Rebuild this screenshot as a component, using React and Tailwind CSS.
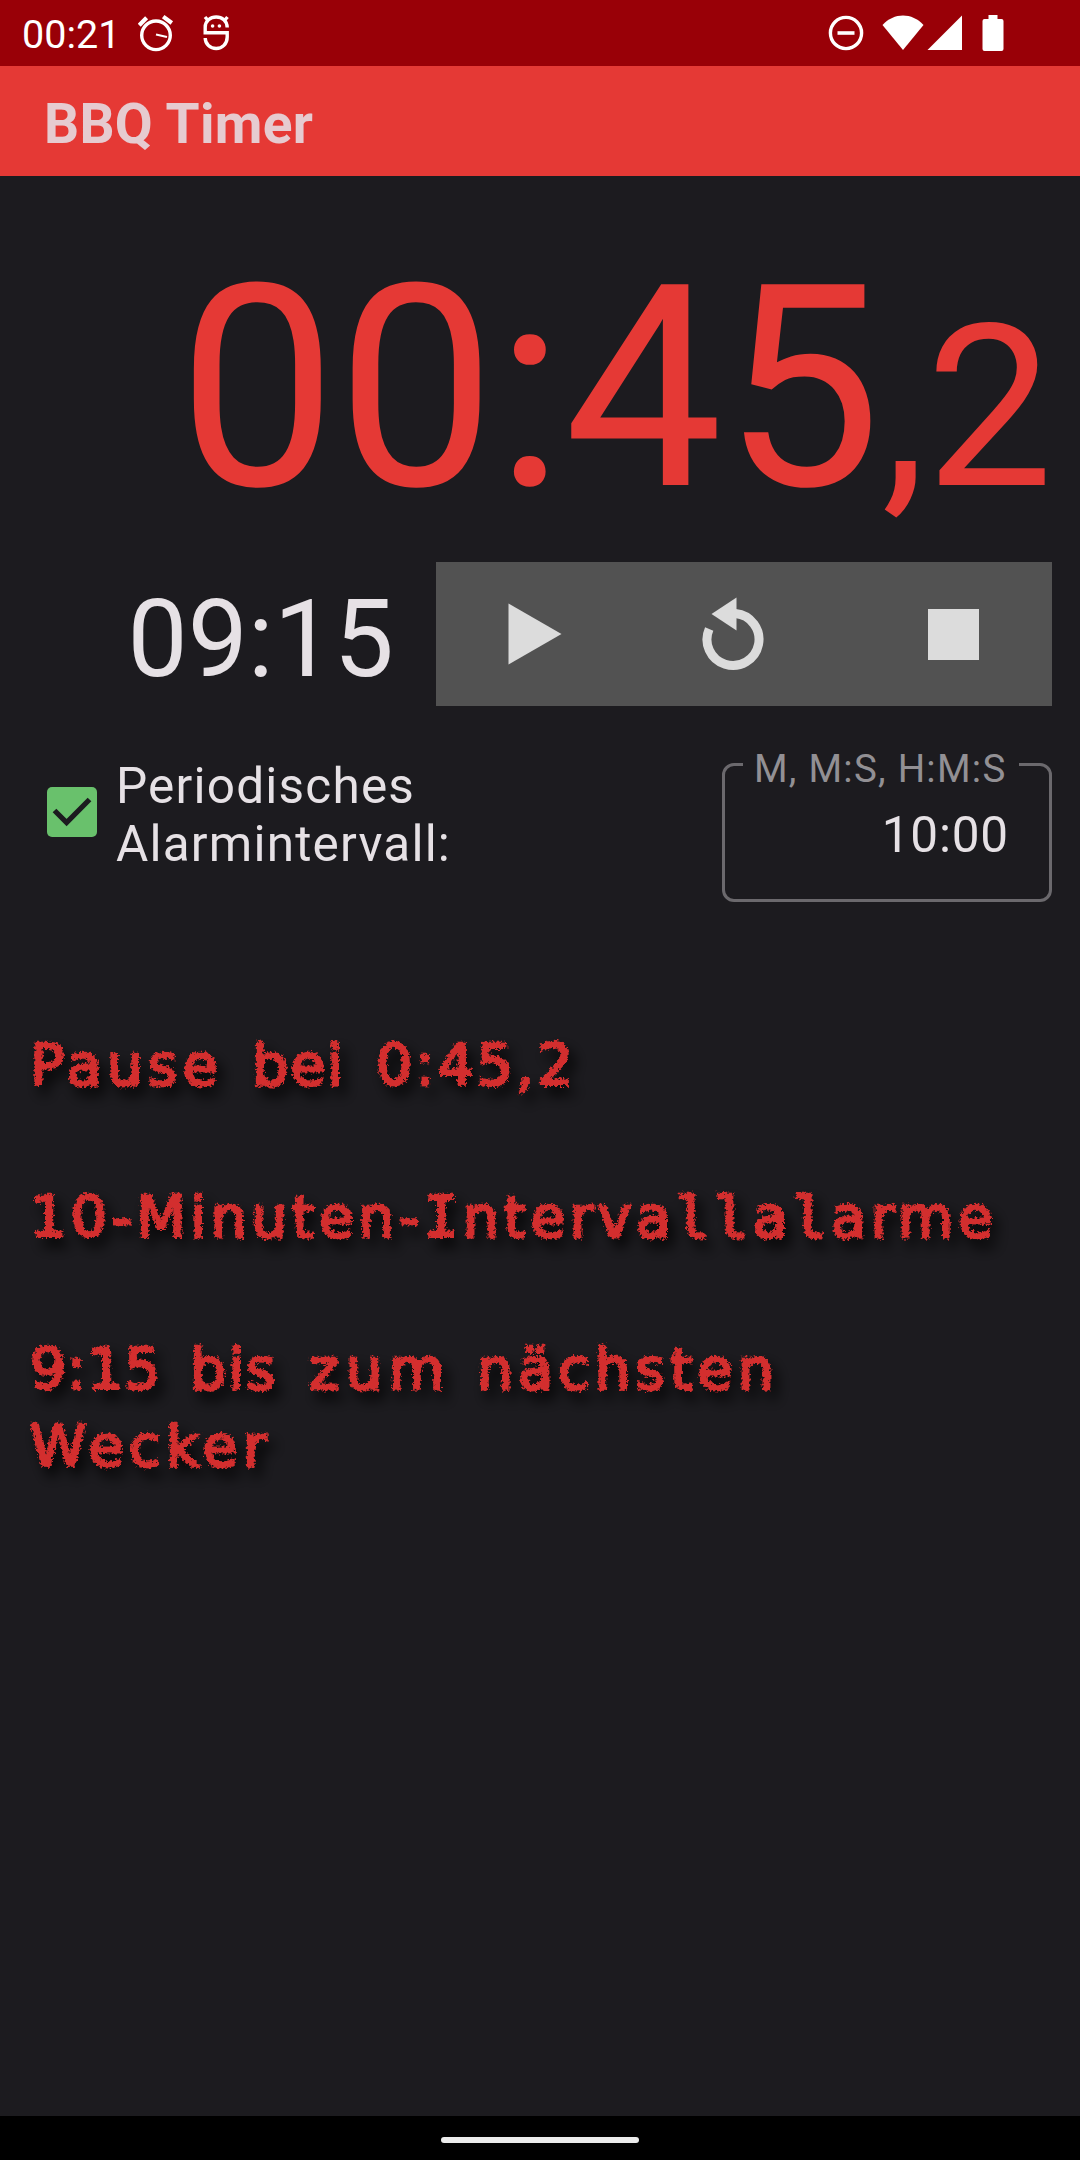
import React from "react";

function AlarmIcon() {
  return (
    <svg width="36" height="38" viewBox="0 0 36 38" fill="none" stroke="#fff">
      <circle cx="18" cy="21.3" r="14.3" strokeWidth="3.4" />
      <path d="M1.2 11.2 8.6 3.8M25.2 2.6 33.8 9" strokeWidth="4.2" />
      <path d="M18 20.5 29 23" strokeWidth="2" />
    </svg>
  );
}

function MascotIcon() {
  return (
    <svg width="28" height="38" viewBox="0 0 28 38" fill="none" stroke="#fff">
      <path d="M25.2 13.5C25.2 7 20 3 14.2 3S3.2 7 3.2 13V18.8H25.2V23C25.2 30 20.2 34.5 14.2 34.5S3.2 30 3.2 24" strokeWidth="3.4" />
      <path d="M3 3 6.500 7M25.500 3 22 7" strokeWidth="3.4" />
      <circle cx="10.6" cy="12" r="1.8" fill="#fff" stroke="none" />
      <circle cx="17.4" cy="12" r="1.8" fill="#fff" stroke="none" />
    </svg>
  );
}

function StatusBar() {
  return (
    <header className="flex h-[66px] items-center bg-[#990007] pl-[22px] text-white">
      <span className="mt-[4px] w-[116px] text-[39.5px] leading-none">00:21</span>
      <AlarmIcon />
      <span className="ml-[28px] flex"><MascotIcon /></span>
      <span className="ml-auto flex">
        <svg width="36" height="36" viewBox="0 0 36 36" fill="none" stroke="#fff">
          <circle cx="18" cy="18" r="15.6" strokeWidth="3.4" />
          <path d="M9.5 18H26.5" strokeWidth="3.6" />
        </svg>
      </span>
      <svg className="ml-[18px]" width="42" height="36" viewBox="0 0 42 36" fill="#fff">
        <path d="M0.5 10C12-2.7 30-2.7 41.5 10L21 35Z" />
      </svg>
      <svg className="ml-[3px]" width="36" height="36" viewBox="0 0 36 36" fill="#fff">
        <path d="M35 0.5V35H0.5Z" />
      </svg>
      <svg className="mr-[76px] ml-[19px]" width="22" height="36" viewBox="0 0 22 36" fill="#fff">
        <path d="M6.5 0H15.5V4H19.5Q21.5 4 21.5 6V34Q21.5 36 19.5 36H2.5Q0.5 36 0.5 34V6Q0.5 4 2.5 4H6.5Z" />
      </svg>
    </header>
  );
}

function Controls() {
  return (
    <div className="flex h-[144px] w-[616px] items-center bg-[#525252] text-[#dcdcdc]">
      <button className="ml-[72px]" aria-label="Start">
        <svg width="54" height="62" viewBox="0 0 54 62" fill="currentColor">
          <path d="M0.5 0.5 53.5 31 0.5 61.5Z" />
        </svg>
      </button>
      <button className="ml-[140px]" aria-label="Reset">
        <svg width="62" height="74" viewBox="0 0 62 74" fill="none">
          <path d="M33.5 16.6A26 26 0 1 1 7.2 32" stroke="currentColor" strokeWidth="9" />
          <path d="M9.5 17 34.5 0.5V33.5Z" fill="currentColor" />
        </svg>
      </button>
      <button className="ml-[164px]" aria-label="Stop">
        <span className="block size-[51px] bg-[#dcdcdc]" />
      </button>
    </div>
  );
}

// Letters with a foot or serif use the monospaced cut of the face.
function Chalk({ children }) {
  return children.split(/([Il]+)/).map((part, i) =>
    /^[Il]/.test(part) ? (
      <span key={i} className="font-['DejaVu_Sans_Mono',monospace]">{part}</span>
    ) : (
      part
    )
  );
}

function Notes() {
  return (
    <section className="mt-[125px] pl-[30px] font-['DejaVu_Sans',sans-serif] text-[57px] leading-[76.2px] whitespace-nowrap text-[#d32f2f] [-webkit-text-stroke:2.5px_#d32f2f] [filter:url(#chalk)_drop-shadow(6px_9px_7px_rgba(0,0,0,0.9))]">
      <p className="mb-[76px] flex">
        <span className="w-[222px] tracking-[5px]"><Chalk>Pause</Chalk></span>{" "}
        <span className="w-[124px] tracking-[2px]"><Chalk>bei</Chalk></span>{" "}
        <span className="tracking-[3px]"><Chalk>0:45,2</Chalk></span>
      </p>
      <p className="mb-[76px] tracking-[4.5px]"><Chalk>10-Minuten-Intervallalarme</Chalk></p>
      <p className="flex">
        <span className="w-[160px] tracking-[0.8px]"><Chalk>9:15</Chalk></span>{" "}
        <span className="w-[119px] tracking-[2px]"><Chalk>bis</Chalk></span>{" "}
        <span className="w-[168px] tracking-[7px]"><Chalk>zum</Chalk></span>{" "}
        <span className="tracking-[5px]"><Chalk>nächsten</Chalk></span>
      </p>
      <p className="tracking-[5.5px]"><Chalk>Wecker</Chalk></p>
    </section>
  );
}

export default function App() {
  return (
    <div className="flex h-[2160px] w-[1080px] flex-col overflow-hidden bg-[#1c1b1f] font-[Roboto,sans-serif]">
      <svg width="0" height="0" className="absolute" aria-hidden="true">
        <filter id="chalk" x="-5%" y="-5%" width="110%" height="110%">
          <feTurbulence type="fractalNoise" baseFrequency="0.4" numOctaves="2" seed="4" result="noise" />
          <feDisplacementMap in="SourceGraphic" in2="noise" scale="7" xChannelSelector="R" yChannelSelector="G" />
        </filter>
      </svg>
      <StatusBar />
      <div className="flex h-[110px] items-center bg-[#e53935] pt-[6px] pl-[44px]">
        <h1 className="text-[55px] leading-none font-bold tracking-[0.3px] text-[#e6cbd0]">BBQ Timer</h1>
      </div>
      <main className="flex-1">
        <div className="flex h-[386px] items-baseline justify-end pt-[71px] pr-[27px] leading-none text-[#e53935]">
          <span className="text-[282.5px] leading-[283px]">00:45</span>
          <span className="text-[226px] leading-[226px]">,2</span>
        </div>
        <div className="flex h-[144px] items-center justify-end pr-[28px]">
          <span className="mt-[11px] mr-[42px] text-[107px] leading-none text-[#e6e1e5]">09:15</span>
          <Controls />
        </div>
        <div className="flex pt-[43px] pr-[28px] pl-[47px] text-[#e6e1e5]">
          <svg className="mt-[38px]" width="50" height="50" viewBox="0 0 50 50">
            <rect width="50" height="50" rx="5" fill="#69c16c" />
            <path d="M7.5 23.5 19.6 35.6 42.5 12.5" fill="none" stroke="#1c1b1f" strokeWidth="5.2" />
          </svg>
          <label className="mt-[8px] ml-[19px] w-[480px] text-[49.5px] leading-[58px] tracking-[1.2px]">
            Periodisches<br />Alarmintervall:
          </label>
          <fieldset className="ml-auto h-[153px] w-[330px] rounded-[12px] border-[3px] border-[#6b696d] pr-[30px] pl-[18px] text-right">
            <legend className="mr-auto h-[31px] w-[276px] pt-[4px] pl-[11px] text-left text-[38.5px] leading-[31px] tracking-[1.25px] whitespace-nowrap text-[#929094]">
              M, M:S, H:M:S
            </legend>
            <div className="mt-[26px] mr-[10px] text-[49.5px] leading-[58px] tracking-[0.8px]">10:00</div>
          </fieldset>
        </div>
        <Notes />
      </main>
      <footer className="flex h-[44px] items-center justify-center bg-black pt-[4px]">
        <div className="h-[6px] w-[198px] rounded-full bg-[#ececec]" />
      </footer>
    </div>
  );
}
